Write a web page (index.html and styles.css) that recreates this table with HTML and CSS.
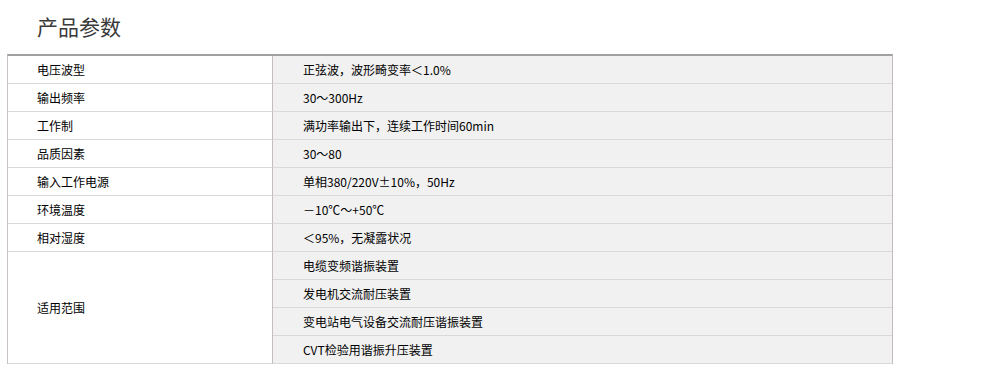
FILE: index.html
```html
<!DOCTYPE html>
<html lang="zh">
<head>
<meta charset="utf-8">
<link rel="stylesheet" href="styles.css">
</head>
<body>
<div class="page">
  <h2 class="title">产品参数</h2>
  <div class="spec">
    <div class="k">电压波型</div><div class="v">正弦波，波形畸变率＜1.0%</div>
    <div class="k">输出频率</div><div class="v">30～300Hz</div>
    <div class="k">工作制</div><div class="v">满功率输出下，连续工作时间60min</div>
    <div class="k">品质因素</div><div class="v">30～80</div>
    <div class="k">输入工作电源</div><div class="v">单相380/220V±10%，50Hz</div>
    <div class="k">环境温度</div><div class="v">－10℃～+50℃</div>
    <div class="k">相对湿度</div><div class="v">＜95%，无凝露状况</div>
    <div class="k span4">适用范围</div>
    <div class="v">电缆变频谐振装置</div>
    <div class="v">发电机交流耐压装置</div>
    <div class="v">变电站电气设备交流耐压谐振装置</div>
    <div class="v">CVT检验用谐振升压装置</div>
  </div>
</div>
</body>
</html>
```
FILE: styles.css
```css
html, body {
  margin: 0;
  padding: 0;
  background: #fff;
}
.page {
  padding: 0 0 0 7px;
  width: 886px;
  font-family: "Noto Sans CJK SC", "Noto Sans", sans-serif;
  color: #000;
}
.title {
  margin: 0;
  padding: 11px 0 0 30px;
  height: 54px;
  box-sizing: border-box;
  font-size: 21px;
  line-height: 30px;
  font-weight: normal;
  color: #3a3a3a;
}
.spec {
  display: grid;
  grid-template-columns: 265px 1fr;
  border-top: 2px solid #a0a0a0;
  border-left: 1px solid #c9c3c6;
  border-right: 1px solid #c4bcc0;
  font-size: 12px;
}
.k, .v {
  height: 27px;
  border-bottom: 1px solid #d9d9d9;
  display: flex;
  align-items: center;
  line-height: 16px;
}
.k {
  background: #fff;
  border-right: 1px solid #c4bcc0;
  padding-left: 29px;
}
.v {
  background: #f1f1f1;
  padding-left: 30px;
}
.span4 {
  grid-row: span 4;
  height: auto;
}
```
